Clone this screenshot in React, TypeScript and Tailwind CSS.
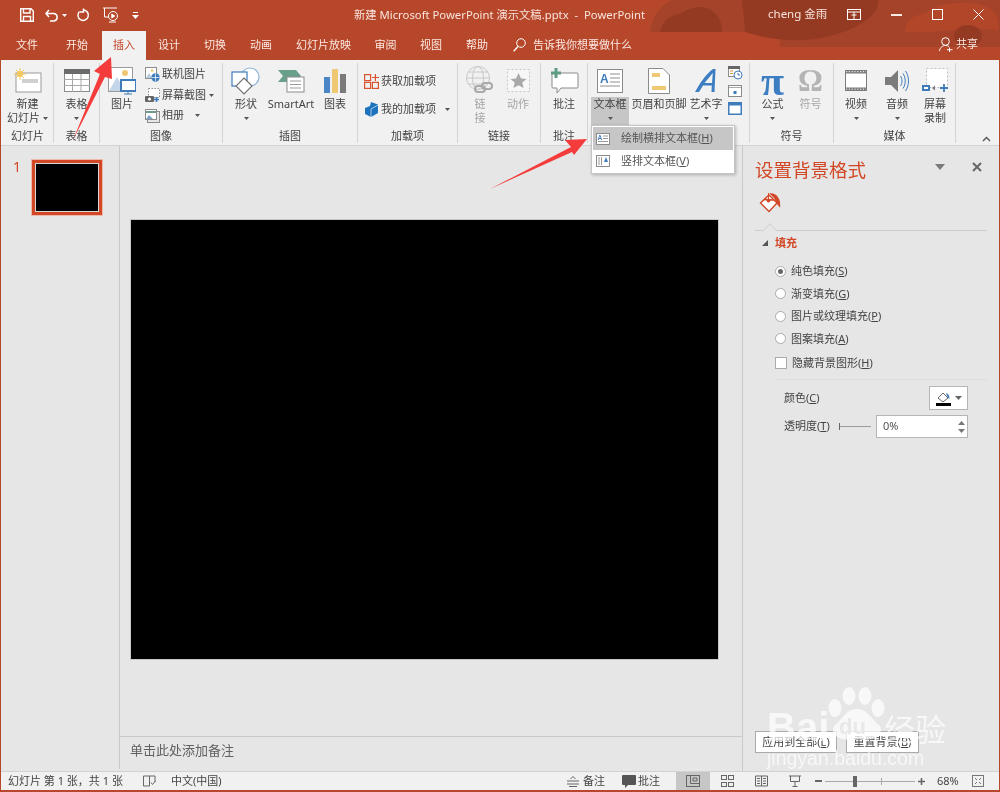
import React from "react";

const FONT = "[font-family:'Noto_Sans','Noto_Sans_CJK_SC',sans-serif]";

const Caret = ({ className = "", color = "#555", w = 5, h = 3 }: { className?: string; color?: string; w?: number; h?: number }) => (
  <svg width={w} height={h} viewBox="0 0 7 4" preserveAspectRatio="none" className={className}><path d="M0 0H7L3.5 4Z" fill={color} /></svg>
);

function Large({ w, icon, lines, caret, disabled, active }: { w: number; icon: React.ReactNode; lines: string[]; caret?: "below" | "inline"; disabled?: boolean; active?: boolean }) {
  return (
    <div className="flex flex-col items-center shrink-0" style={{ width: w }}>
      <div className="h-[33px] flex items-center justify-center">{icon}</div>
      <div className={`flex flex-col items-center leading-[14px] ${active ? "bg-[#c6c6c6] w-[38px] h-[29px]" : ""} ${disabled ? "text-[#a6a6a6]" : "text-[#444]"}`}>
        {lines.map((l, i) => (
          <div key={i} className="whitespace-nowrap flex items-center gap-[3px] h-[14px]">
            {l}
            {caret === "inline" && i === lines.length - 1 && <Caret />}
          </div>
        ))}
        {caret === "below" && <div className="h-[14px] flex items-center"><Caret /></div>}
      </div>
    </div>
  );
}

function Group({ w, label, children }: { w: number; label: string; children: React.ReactNode }) {
  return (
    <div className="flex flex-col border-r border-[#d4d4d4] shrink-0" style={{ width: w }}>
      <div className="flex-1 pt-[1px] flex min-h-0">{children}</div>
      <div className="h-[17px] leading-[19px] text-center text-[#444]">{label}</div>
    </div>
  );
}

function Small({ icon, text, caret, caretGap = 3 }: { icon: React.ReactNode; text: string; caret?: boolean; caretGap?: number }) {
  return (
    <div className="flex items-center h-[21px] text-[#444] whitespace-nowrap">
      <div className="w-[16px] flex justify-center mr-[2px]">{icon}</div>
      <span>{text}</span>
      {caret && <span className="flex shrink-0" style={{ marginLeft: caretGap }}><Caret /></span>}
    </div>
  );
}

const U = ({ t, k }: { t: string; k: string }) => (
  <span>{t}(<span className="underline">{k}</span>)</span>
);

function Radio({ checked, text, k }: { checked?: boolean; text: string; k: string }) {
  return (
    <div className="h-[22.5px] flex items-center pl-[20px]">
      <div className="w-[11px] h-[11px] rounded-full border border-[#ababab] bg-white flex items-center justify-center mr-[5px]">
        {checked && <div className="w-[5px] h-[5px] rounded-full bg-[#666]" />}
      </div>
      <U t={text} k={k} />
    </div>
  );
}

const Tab = ({ w, t, active }: { w: number; t: string; active?: boolean }) => (
  <div
    style={{ width: w }}
    className={`text-center shrink-0 leading-[28px] h-[29px] ${active ? "bg-[#f1f1f1] text-[#c4472b]" : "text-[#fbe9e3]"}`}
  >
    {t}
  </div>
);

const IcNewSlide = () => (
  <svg width="28" height="26" viewBox="0 0 28 26">
    <rect x="2" y="5" width="25" height="19" fill="#fff" stroke="#9a9a9a" />
    <rect x="8" y="11" width="16" height="4" fill="#d0d0d0" />
    <circle cx="6" cy="6" r="3" fill="#f2c75c" />
    <path d="M6 0V12M0 6H12M2 2L10 10M10 2L2 10" stroke="#f2c75c" strokeWidth="1" />
  </svg>
);
const IcTable = () => (
  <svg width="26" height="23" viewBox="0 0 26 23">
    <rect x="0.5" y="0.5" width="25" height="22" fill="#fff" stroke="#8b8b8b" />
    <rect x="0" y="0" width="26" height="5" fill="#6b6b6b" />
    <path d="M0 10.5H26M0 16.5H26M8.5 5V23M17 5V23" stroke="#a8a8a8" />
  </svg>
);
const IcPicture = () => (
  <svg width="28" height="28" viewBox="0 0 28 28">
    <rect x="0.5" y="0.5" width="24" height="24" fill="#fff" stroke="#9a9a9a" />
    <path d="M1 24L9 10L17 24Z" fill="#c3d5e8" />
    <circle cx="17" cy="6" r="3" fill="#f0c674" />
    <rect x="13" y="13" width="15" height="11" fill="#fff" stroke="#3f7cbc" strokeWidth="2" />
    <path d="M20 24V27M16 27H24" stroke="#3f7cbc" />
  </svg>
);
const IcOnline = () => (
  <svg width="15" height="15" viewBox="0 0 15 15">
    <rect x="0.5" y="0.5" width="11" height="11" fill="#fff" stroke="#8c8c8c" />
    <path d="M1 11L4 6L7 11Z" fill="#b7cde3" />
    <circle cx="7" cy="3.5" r="1.3" fill="#f0c674" />
    <circle cx="10.5" cy="10.5" r="4.2" fill="#3f7cbc" />
    <path d="M6.5 10.5H14.5M10.5 6.5V14.5" stroke="#fff" strokeWidth=".7" />
  </svg>
);
const IcShot = () => (
  <svg width="15" height="15" viewBox="0 0 15 15">
    <rect x="3.5" y="0.5" width="11" height="9" fill="#fff" stroke="#8c8c8c" strokeDasharray="1.5 1.5" />
    <rect x="0" y="8" width="9" height="6" rx="1" fill="#666" />
    <circle cx="4.5" cy="11" r="1.6" fill="#fff" />
    <path d="M11.5 9V14M9 11.5H14" stroke="#3f7cbc" strokeWidth="1.6" />
  </svg>
);
const IcAlbum = () => (
  <svg width="15" height="14" viewBox="0 0 15 14">
    <rect x="2.5" y="2.5" width="12" height="11" fill="#e6e6e6" stroke="#8c8c8c" />
    <rect x="0.5" y="0.5" width="11" height="10" fill="#fff" stroke="#8c8c8c" />
    <path d="M1 3H11" stroke="#6f9a86" strokeWidth="2" />
    <path d="M1 10L4 6L8 10Z" fill="#7aa2c9" />
  </svg>
);
const IcShapes = () => (
  <svg width="30" height="28" viewBox="0 0 30 28">
    <circle cx="19" cy="10" r="9" fill="#fff" stroke="#8db2d9" strokeWidth="1.2" />
    <rect x="1" y="5" width="15" height="14" fill="#fff" stroke="#3f7cbc" strokeWidth="1.2" />
    <path d="M13 11L21 19L13 27L5 19Z" fill="#fff" stroke="#6e6e6e" strokeWidth="1.1" />
  </svg>
);
const IcSmartArt = () => (
  <svg width="28" height="24" viewBox="0 0 28 24">
    <path d="M1 1H19L24 7L19 13H1L6 7Z" fill="#6aa08a" />
    <rect x="10" y="8" width="17" height="15" fill="#fff" stroke="#8b8b8b" />
    <path d="M13 12H24M13 15.5H24M13 19H24" stroke="#9a9a9a" />
  </svg>
);
const IcChart = () => (
  <svg width="22" height="25" viewBox="0 0 22 25">
    <rect x="0" y="9" width="6" height="16" fill="#4a86c5" />
    <rect x="8" y="1" width="6" height="24" fill="#efc873" />
    <rect x="16" y="6" width="6" height="19" fill="#7a7a7a" />
  </svg>
);
const IcGetAdd = () => (
  <svg width="15" height="15" viewBox="0 0 15 15" fill="none" stroke="#d9532f" strokeWidth="1.2">
    <rect x="0.6" y="0.6" width="6" height="6" />
    <rect x="0.6" y="8.4" width="6" height="6" />
    <rect x="8.4" y="8.4" width="6" height="6" />
    <path d="M11.4 0V7M8 3.5H15" />
  </svg>
);
const IcMyAdd = () => (
  <svg width="15" height="15" viewBox="0 0 15 15">
    <path d="M7 0L14 2.5V11L7 15L1 12V6L6 4Z" fill="#1e73be" />
    <path d="M7 7L14 3M7 7V15" stroke="#fff" strokeWidth=".6" />
  </svg>
);
const IcLink = () => (
  <svg width="30" height="30" viewBox="0 0 30 30" fill="none">
    <circle cx="13" cy="12" r="11.5" stroke="#c8c8c8" />
    <ellipse cx="13" cy="12" rx="5.5" ry="11.5" stroke="#c8c8c8" />
    <path d="M1.5 12H24.5M3 6H23M3 18H23" stroke="#c8c8c8" />
    <rect x="10" y="20" width="10" height="6" rx="3" stroke="#a9a9a9" strokeWidth="2" />
    <rect x="17" y="17" width="10" height="6" rx="3" stroke="#a9a9a9" strokeWidth="2" />
  </svg>
);
const IcAction = () => (
  <svg width="25" height="25" viewBox="0 0 25 25">
    <rect x="1.5" y="1.5" width="22" height="22" fill="#f7f7f7" stroke="#c4c4c4" strokeDasharray="2 2" />
    <path d="M12.5 5L15 10.5L20.5 11L16.3 14.6L17.6 20L12.5 17.2L7.4 20L8.7 14.6L4.5 11L10 10.5Z" fill="#a9a9a9" />
  </svg>
);
const IcComment = () => (
  <svg width="29" height="26" viewBox="0 0 29 26">
    <path d="M3 5H27A1 1 0 0 1 28 6V19A1 1 0 0 1 27 20H11L7 25V20H3A1 1 0 0 1 2 19V6A1 1 0 0 1 3 5Z" fill="#fff" stroke="#8b8b8b" />
    <path d="M6 0V10M1 5H11" stroke="#5f9c84" strokeWidth="3" />
  </svg>
);
const IcTextBox = () => (
  <svg width="26" height="24" viewBox="0 0 26 24">
    <rect x="0.5" y="0.5" width="25" height="23" fill="#fff" stroke="#8b8b8b" />
    <text x="3" y="14" fontSize="12" fontWeight="700" fill="#3f7cbc" fontFamily="Liberation Sans">A</text>
    <path d="M13 5H23M13 9H23M13 13H23M3 17H23" stroke="#8f8f8f" />
  </svg>
);
const IcHeader = () => (
  <svg width="22" height="26" viewBox="0 0 22 26">
    <path d="M.5.5H15L21.5 7V25.5H.5Z" fill="#fff" stroke="#8b8b8b" />
    <rect x="4" y="5" width="8" height="4" fill="#efc873" />
    <rect x="4" y="18" width="14" height="4" fill="#efc873" />
  </svg>
);
const IcWordArt = () => (
  <svg width="24" height="24" viewBox="0 0 24 24">
    <path d="M1 23C6 14 12 5 19 0H21.5L20.5 23H17.5L17.8 16.5H9L5 23ZM10.5 14H18L18.8 4Z" fill="#3d7ec2" />
  </svg>
);
const IcDate = () => (
  <svg width="15" height="15" viewBox="0 0 15 15">
    <rect x=".5" y="1.5" width="11" height="10" fill="#fff" stroke="#8b8b8b" />
    <rect x="0" y="1" width="12" height="3" fill="#666" />
    <path d="M2 6H5M2 8.5H5" stroke="#d9932f" />
    <circle cx="10" cy="10" r="4" fill="#fff" stroke="#3f7cbc" />
    <path d="M10 8V10H12" stroke="#3f7cbc" fill="none" />
  </svg>
);
const IcNum = () => (
  <svg width="14" height="12" viewBox="0 0 14 12">
    <rect x=".5" y=".5" width="13" height="11" fill="#fff" stroke="#8b8b8b" />
    <path d="M1 2.5H13" stroke="#aaa" />
    <rect x="5.5" y="6" width="3" height="3" fill="#3f7cbc" />
  </svg>
);
const IcObj = () => (
  <svg width="14" height="13" viewBox="0 0 14 13">
    <rect x=".75" y=".75" width="12.5" height="11.5" fill="#fff" stroke="#3f7cbc" strokeWidth="1.5" />
    <rect x="0" y="0" width="14" height="3.5" fill="#3f7cbc" />
  </svg>
);
const IcFilm = () => (
  <svg width="22" height="21" viewBox="0 0 22 21">
    <rect x=".5" y=".5" width="21" height="20" fill="#fff" stroke="#7b7b7b" />
    <rect x="0" y="0" width="22" height="3.5" fill="#7b7b7b" />
    <rect x="0" y="17.5" width="22" height="3.5" fill="#7b7b7b" />
    <path d="M1 1.7H21M1 19.2H21" stroke="#fff" strokeDasharray="1.2 1.6" />
  </svg>
);
const IcAudio = () => (
  <svg width="24" height="24" viewBox="0 0 24 24" fill="none">
    <path d="M0 8H6L13 1V23L6 16H0Z" fill="#7b7b7b" />
    <path d="M15.5 7C17.5 10 17.5 14 15.5 17M18 4.5C21 9 21 15 18 19.5M20.5 2C24.5 8 24.5 16 20.5 22" stroke="#3f7cbc" />
  </svg>
);
const IcRec = () => (
  <svg width="27" height="26" viewBox="0 0 27 26">
    <rect x="4.5" y=".5" width="21" height="19" fill="#fff" stroke="#bdbdbd" strokeDasharray="2 2" />
    <rect x="0" y="17" width="8" height="6" fill="#3f7cbc" />
    <rect x="2" y="19" width="4" height="2" fill="#fff" />
    <path d="M10 20L13 17.5V22.5Z" fill="#7b7b7b" />
    <path d="M22 16V24M18 20H26" stroke="#3f7cbc" strokeWidth="1.8" />
  </svg>
);

export default function App() {
  return (
    <div className={`relative w-[1000px] h-[792px] overflow-hidden bg-[#b7472a] flex flex-col text-[11px] blur-[0.3px] ${FONT}`}>
      {/* Header */}
      <div className="relative h-[60px] shrink-0">
        <svg className="absolute left-0 top-0" width="1000" height="60" viewBox="0 0 1000 60">
          <path d="M650 32C652 16 660 6 672 0H1000V47H780V32Z" fill="#a5432a" />
          <path d="M678 32A24 24 0 0 1 722 32Z" fill="#953a22" />
          <path d="M660 32A22 22 0 0 1 680 14C700 0 722 8 722 32Z" fill="#953a22" />
          <path d="M742 0H878C880 14 860 28 830 36C800 44 770 40 745 32Z" fill="#953a22" />
          <path d="M905 32C905 18 918 14 925 14C935 2 970 0 985 6C998 12 1000 22 998 30C970 26 940 34 905 32Z" fill="#b7472a" opacity=".75" />
          <ellipse cx="968" cy="36" rx="14" ry="11" fill="#953a22" />
        </svg>
        <div className="relative h-[30px] flex items-center text-[#f8e4dd]">
          <div className="flex items-center w-[150px] pl-[20px] text-white">
            <svg width="14" height="14" viewBox="0 0 14 14" className="mr-[11px]" fill="none" stroke="#fff" strokeWidth="1.4">
              <path d="M.7.7H11L13.3 3V13.3H.7Z" />
              <path d="M3.5 1V5H10V1M3.5 13V8.5H10.5V13" />
            </svg>
            <svg width="14" height="13" viewBox="0 0 14 13" className="mr-[3px]" fill="none" stroke="#fff" strokeWidth="1.5">
              <path d="M1 4.5H9A3.8 3.8 0 0 1 9 12H5M4 1L1 4.5L4 8" />
            </svg>
            <Caret color="#fff" className="mr-[9px]" />
            <svg width="14" height="14" viewBox="0 0 14 14" className="mr-[12px]" fill="none" stroke="#fff" strokeWidth="1.5">
              <path d="M7.5 2A5.2 5.2 0 1 1 3.5 3.5M7.5 .5V4H4" />
            </svg>
            <svg width="18" height="16" viewBox="0 0 18 16" className="mr-[12px]" fill="none" stroke="#fff">
              <path d="M1 1H15M2.5 1V10H7" />
              <circle cx="11" cy="9" r="4.5" />
              <path d="M9.8 7V11L12.8 9Z" fill="#fff" />
              <path d="M7 15H14" />
            </svg>
            <svg width="7" height="7" viewBox="0 0 7 7"><path d="M1 0H6V1H1ZM0 3H7L3.5 7Z" fill="#fff" /></svg>
          </div>
          <div className="ml-[204px] text-[11.3px] whitespace-nowrap">新建 Microsoft PowerPoint 演示文稿.pptx&nbsp; -&nbsp; PowerPoint</div>
          <div className="absolute left-[768px] top-0 h-[30px] leading-[28px] whitespace-nowrap text-[11.5px]">cheng 金雨</div>
          <svg className="absolute left-[847px] top-[9px]" width="14" height="11" viewBox="0 0 14 11" fill="none" stroke="#fff"><rect x=".5" y=".5" width="13" height="10" /><path d="M.5 3H13.5M7 3V10.5M4.5 6H9.5" /></svg>
          <div className="absolute left-[891px] top-[14px] w-[11px] h-[1.5px] bg-[#fbe9e3]" />
          <div className="absolute left-[932px] top-[9px] w-[11px] h-[11px] border border-white" />
          <svg className="absolute left-[973px] top-[9px]" width="11" height="11" viewBox="0 0 11 11" stroke="#fff"><path d="M.5.5L10.5 10.5M10.5.5L.5 10.5" /></svg>
        </div>
        <div className="relative h-[30px] flex items-start pt-[1px] pl-[2px]">
          <Tab w={50} t="文件" />
          <Tab w={50} t="开始" />
          <Tab w={44} t="插入" active />
          <Tab w={46} t="设计" />
          <Tab w={46} t="切换" />
          <Tab w={46} t="动画" />
          <Tab w={79} t="幻灯片放映" />
          <Tab w={45} t="审阅" />
          <Tab w={46} t="视图" />
          <Tab w={46} t="帮助" />
          <div className="flex items-center h-[28px] ml-[13px] text-[#fbe9e3] whitespace-nowrap">
            <svg width="13" height="14" viewBox="0 0 13 14" fill="none" stroke="#fff" className="mr-[7px]"><circle cx="8" cy="5" r="4.3" /><path d="M5 8.5L.7 13.3" strokeWidth="1.3" /></svg>
            告诉我你想要做什么
          </div>
          <div className="absolute left-[939px] top-[6px] flex items-center text-[#fbe9e3] whitespace-nowrap">
            <svg width="14" height="15" viewBox="0 0 14 15" fill="none" stroke="#fff" className="mr-[3px]"><circle cx="6.5" cy="4.5" r="3.8" /><path d="M.5 14C1 10 4 8.5 6.5 8.5C8 8.5 9 9 10 9.5M10.5 10.5V15M8 12.7H13.5" /></svg>
            共享
          </div>
        </div>
      </div>

      {/* Ribbon */}
      <div className="h-[85px] shrink-0 mx-[1px] bg-[#f1f1f1] flex pt-[3px] pb-[2px] pl-[1px] relative text-[11px]">
        <Group w={52} label="幻灯片">
          <Large w={51} icon={<IcNewSlide />} lines={["新建", "幻灯片"]} caret="inline" />
        </Group>
        <Group w={46} label="表格">
          <Large w={45} icon={<IcTable />} lines={["表格"]} caret="below" />
        </Group>
        <Group w={123} label="图像">
          <Large w={44} icon={<IcPicture />} lines={["图片"]} />
          <div className="flex flex-col">
            <Small icon={<IcOnline />} text="联机图片" />
            <Small icon={<IcShot />} text="屏幕截图" caret />
            <Small icon={<IcAlbum />} text="相册" caret caretGap={11} />
          </div>
        </Group>
        <Group w={135} label="插图">
          <Large w={46} icon={<IcShapes />} lines={["形状"]} caret="below" />
          <Large w={44} icon={<IcSmartArt />} lines={["SmartArt"]} />
          <Large w={44} icon={<IcChart />} lines={["图表"]} />
        </Group>
        <Group w={100} label="加载项">
          <div className="flex flex-col pl-[5px] pt-[7px] gap-[7px]">
            <Small icon={<IcGetAdd />} text="获取加载项" />
            <Small icon={<IcMyAdd />} text="我的加载项" caret caretGap={9} />
          </div>
        </Group>
        <Group w={83} label="链接">
          <Large w={44} icon={<IcLink />} lines={["链", "接"]} disabled />
          <Large w={32} icon={<IcAction />} lines={["动作"]} disabled />
        </Group>
        <Group w={47} label="批注">
          <Large w={46} icon={<IcComment />} lines={["批注"]} />
        </Group>
        <Group w={162} label="">
          <Large w={44} icon={<IcTextBox />} lines={["文本框"]} caret="below" active />
          <Large w={54} icon={<IcHeader />} lines={["页眉和页脚"]} />
          <Large w={40} icon={<IcWordArt />} lines={["艺术字"]} caret="below" />
          <div className="flex flex-col items-center w-[18px] pt-[1px] gap-[5px]">
            <IcDate />
            <IcNum />
            <IcObj />
          </div>
        </Group>
        <Group w={84} label="符号">
          <Large w={45} icon={<span className="text-[#3d7ec2] text-[42px] leading-[32px] [font-family:'Liberation_Serif',serif] font-bold">π</span>} lines={["公式"]} caret="below" />
          <Large w={31} icon={<span className="text-[#b4b4b4] text-[31px] leading-[32px] [font-family:'Liberation_Serif',serif] font-bold">Ω</span>} lines={["符号"]} disabled />
        </Group>
        <Group w={122} label="媒体">
          <Large w={44} icon={<IcFilm />} lines={["视频"]} caret="below" />
          <Large w={38} icon={<IcAudio />} lines={["音频"]} caret="below" />
          <Large w={38} icon={<IcRec />} lines={["屏幕", "录制"]} />
        </Group>
        <svg className="absolute left-[981px] top-[76px]" width="9" height="6" viewBox="0 0 9 6" fill="none" stroke="#555" strokeWidth="1.4"><path d="M1 5L4.5 1.5L8 5" /></svg>
      </div>
      <div className="h-[1px] mx-[1px] shrink-0 bg-[#d2d2d2]" />

      {/* Main */}
      <div className="h-[625px] shrink-0 mx-[1px] flex bg-[#e6e6e6]">
        <div className="w-[119px] shrink-0 border-r border-[#c9c9c9] flex items-start pt-[14px] pl-[12px] mb-[2px]">
          <span className="text-[#d24726] text-[14px] leading-[14px] w-[19px]">1</span>
          <div className="w-[70px] h-[55px] border-[3px] border-[#d24726] bg-black outline outline-[1px] outline-[#eeb9aa] shadow-[inset_0_0_0_1px_#d8d8d8]" />
        </div>
        <div className="w-[623px] shrink-0 border-r border-[#c9c9c9] flex flex-col">
          <div className="flex-1 pl-[11px] pt-[74px]">
            <div className="w-[587px] h-[439px] bg-black outline outline-[1px] outline-[#c8c8c8]" />
          </div>
          <div className="h-[35px] border-t border-[#c9c9c9] pl-[10px] leading-[26px] text-[13px] text-[#616161]">单击此处添加备注</div>
        </div>
        <div className="flex-1 flex flex-col pl-[12px] text-[#444] relative">
          <div className="mt-[12px] h-[24px] flex items-center text-[#d24726] text-[18.5px] whitespace-nowrap">设置背景格式</div>
          <svg className="absolute left-[192px] top-[18px]" width="10" height="6" viewBox="0 0 10 6"><path d="M0 0H10L5 6Z" fill="#7a7a7a" /></svg>
          <svg className="absolute left-[229px] top-[16px]" width="10" height="10" viewBox="0 0 10 10" stroke="#666" strokeWidth="2"><path d="M1 1L9 9M9 1L1 9" /></svg>
          <div className="mt-[10px] h-[22px] pl-[4px]">
            <svg width="23" height="22" viewBox="0 0 23 22" fill="none" stroke="#d24726" strokeWidth="1.4">
              <path d="M1.5 11L10 3L18 11L10 19.5Z" fill="#fff" />
              <path d="M5 7.5C10 8 14 8 15 8" />
              <path d="M9.5 1V8" strokeWidth="1" />
              <circle cx="9.5" cy="8.5" r="1.2" fill="#d24726" />
              <path d="M12 2C17 2 21 7 20.5 14L18 11L16 6Z" fill="#d24726" />
            </svg>
          </div>
          <svg className="mt-[8px]" width="232" height="9" viewBox="0 0 232 9" fill="none" stroke="#cfcfcf"><path d="M0 8.5H9L15 1.5L21 8.5H232" /></svg>
          <div className="mt-[4px] h-[16px] flex items-center pl-[7px]">
            <svg width="6" height="6" viewBox="0 0 6 6" className="mr-[7px]"><path d="M0 6H6V0Z" fill="#555" /></svg>
            <span className="text-[#d24726] font-bold">填充</span>
          </div>
          <div className="mt-[9px]">
            <Radio checked text="纯色填充" k="S" />
            <Radio text="渐变填充" k="G" />
            <Radio text="图片或纹理填充" k="P" />
            <Radio text="图案填充" k="A" />
          </div>
          <div className="mt-[2px] h-[22px] flex items-center pl-[20px]">
            <div className="w-[12px] h-[12px] border border-[#ababab] bg-white mr-[5px]" />
            <U t="隐藏背景图形" k="H" />
          </div>
          <div className="mt-[5px] h-[1px] ml-[20px] w-[212px] bg-[#dcdcdc]" />
          <div className="mt-[6px] h-[24px] flex items-center pl-[29px]">
            <div className="w-[145px]"><U t="颜色" k="C" /></div>
            <div className="w-[39px] h-[24px] border border-[#b5b5b5] bg-white flex items-center justify-center gap-[3px]">
              <svg width="16" height="16" viewBox="0 0 16 16">
                <path d="M2 8L7 3L12 8L7 12Z" fill="#fff" stroke="#666" />
                <path d="M10 3C13 4 14 7 13 9L11 6Z" fill="#3f7cbc" />
                <rect x="0" y="13" width="15" height="3" fill="#000" />
              </svg>
              <Caret color="#666" w={7} h={4} />
            </div>
          </div>
          <div className="mt-[5px] h-[23px] flex items-center pl-[29px]">
            <div className="w-[55px]"><U t="透明度" k="T" /></div>
            <div className="w-[32px] h-[1px] bg-[#9a9a9a] relative mr-[5px]"><div className="absolute left-0 top-[-3px] w-[1px] h-[7px] bg-[#666]" /></div>
            <div className="w-[92px] h-[23px] border border-[#b5b5b5] bg-white flex items-center justify-between pl-[6px] pr-[2px]">
              <span className="text-[#555]">0%</span>
              <div className="flex flex-col gap-[4px]">
                <svg width="7" height="4" viewBox="0 0 7 4"><path d="M0 4H7L3.5 0Z" fill="#777" /></svg>
                <Caret color="#777" w={7} h={4} />
              </div>
            </div>
          </div>
          <div className="mt-auto mb-[18px] flex gap-[9px]">
            <div className="w-[82px] h-[22px] border border-[#ababab] bg-white flex items-center justify-center"><U t="应用到全部" k="L" /></div>
            <div className="w-[73px] h-[22px] border border-[#ababab] bg-white flex items-center justify-center"><U t="重置背景" k="B" /></div>
          </div>
        </div>
      </div>

      {/* Status bar */}
      <div className="h-[19px] shrink-0 mx-[1px] mb-[2px] bg-[#f1f1f1] border-t border-[#d2d2d2] flex items-center text-[#444] text-[11px] whitespace-nowrap">
        <span className="ml-[7px] w-[134px]">幻灯片 第 1 张，共 1 张</span>
        <svg width="13" height="12" viewBox="0 0 13 12" fill="none" stroke="#666" className="mr-[15px] ml-[1px]"><path d="M.5 1H6.5V11H.5ZM6.5 1H12V7M8 7.5L9.5 9.5L12.5 6" /></svg>
        <span>中文(中国)</span>
        <div className="flex-1" />
        <svg width="12" height="11" viewBox="0 0 12 11" fill="none" stroke="#666" className="mr-[4px]"><path d="M0 5H12M0 8H12M2 10.5H10M3.5 3L6 .5L8.5 3" /></svg>
        <span className="mr-[17px]">备注</span>
        <svg width="14" height="13" viewBox="0 0 14 13" className="mr-[2px]"><path d="M1 0H13A1 1 0 0 1 14 1V9A1 1 0 0 1 13 10H6L3 13V10H1A1 1 0 0 1 0 9V1A1 1 0 0 1 1 0Z" fill="#555" /></svg>
        <span className="mr-[16px]">批注</span>
        <div className="w-[34px] h-[18px] bg-[#c6c6c6] flex items-center justify-center">
          <svg width="14" height="12" viewBox="0 0 14 12" fill="none" stroke="#666"><rect x=".5" y=".5" width="13" height="11" /><path d="M4.5 .5V8.5H13.5M7 3H11V6H7Z" /></svg>
        </div>
        <div className="w-[34px] flex justify-center">
          <svg width="13" height="12" viewBox="0 0 13 12" fill="none" stroke="#666"><rect x=".5" y=".5" width="5" height="4" /><rect x="7.5" y=".5" width="5" height="4" /><rect x=".5" y="7.5" width="5" height="4" /><rect x="7.5" y="7.5" width="5" height="4" /></svg>
        </div>
        <div className="w-[34px] flex justify-center">
          <svg width="13" height="12" viewBox="0 0 13 12" fill="none" stroke="#666"><path d="M.5 1H6.5V11H.5ZM6.5 1H12.5V11H6.5ZM2 3.5H5M2 6H5M2 8.5H5M8 3.5H11M8 6H11M8 8.5H11" /></svg>
        </div>
        <div className="w-[34px] flex justify-center">
          <svg width="12" height="12" viewBox="0 0 12 12" fill="none" stroke="#666"><path d="M0 1H12M1.5 1V6.5H10.5V1M6 6.5V11.5M3.5 11.5H8.5" /></svg>
        </div>
        <div className="w-[7px] h-[2px] bg-[#666] ml-[3px] mr-[3px]" />
        <div className="relative w-[90px] h-[1px] bg-[#a8a8a8]">
          <div className="absolute left-[56px] top-[-3px] w-[1px] h-[7px] bg-[#a8a8a8]" />
          <div className="absolute left-[28px] top-[-5px] w-[4px] h-[11px] bg-[#666]" />
        </div>
        <svg width="7" height="7" viewBox="0 0 7 7" className="ml-[3px]" stroke="#666" strokeWidth="1.6"><path d="M3.5 0V7M0 3.5H7" /></svg>
        <span className="ml-[12px] w-[35px]">68%</span>
        <svg width="12" height="12" viewBox="0 0 12 12" fill="none" stroke="#777" className="mr-[15px]"><rect x=".5" y=".5" width="11" height="11" /><path d="M3 3L5 5M9 3L7 5M3 9L5 7M9 9L7 7" /></svg>
      </div>

      {/* Dropdown menu */}
      <div className="absolute left-[591px] top-[125px] w-[144px] h-[49px] bg-white border border-[#c6c6c6] shadow-[1px_1px_3px_rgba(0,0,0,0.25)] pt-[1px] text-[#555]">
        <div className="h-[23px] mx-[1px] bg-[#c6c6c6] flex items-center pl-[3px]">
          <svg width="14" height="12" viewBox="0 0 14 12" className="mr-[11px]"><rect x=".5" y=".5" width="13" height="11" fill="#fff" stroke="#8b8b8b" /><text x="1.5" y="7" fontSize="6.5" fontWeight="700" fill="#3f7cbc" fontFamily="Liberation Sans">A</text><path d="M7 3H12M7 5.5H12M2 8.5H12" stroke="#999" /></svg>
          <U t="绘制横排文本框" k="H" />
        </div>
        <div className="h-[22px] mx-[1px] flex items-center pl-[3px]">
          <svg width="14" height="12" viewBox="0 0 14 12" className="mr-[11px]"><rect x=".5" y=".5" width="13" height="11" fill="#fff" stroke="#8b8b8b" /><path d="M3 2V10M5.5 2V10" stroke="#999" /><path d="M8 7L10 2L12 7Z" fill="#3f7cbc" /></svg>
          <U t="竖排文本框" k="V" />
        </div>
      </div>

      {/* Baidu watermark */}
      <div className="absolute left-[766px] top-[684px] w-[184px] h-[90px] pointer-events-none text-white/70 [font-family:'Liberation_Sans',sans-serif]">
        <svg className="absolute left-[56px] top-[0px]" width="70" height="62" viewBox="0 0 70 62" fill="rgba(255,255,255,0.72)">
          <ellipse cx="27" cy="12" rx="6.5" ry="9" />
          <ellipse cx="43" cy="12" rx="6.5" ry="9" />
          <ellipse cx="13" cy="24" rx="6.5" ry="9" />
          <ellipse cx="56" cy="24" rx="6.5" ry="9" />
          <path d="M35 25C46 25 50 36 58 42C62 52 52 58 35 55C18 58 8 52 12 42C20 36 24 25 35 25Z" />
        </svg>
        <span className="absolute left-[1px] top-[18px] text-[40px] leading-[50px] font-bold whitespace-nowrap">Bai</span>
        <span className="absolute left-[73px] top-[30px] text-[22px] leading-[26px] font-bold text-[#e6e6e6]/90">du</span>
        <span className="absolute left-[118px] top-[26px] text-[31px] leading-[36px] whitespace-nowrap [font-family:'Noto_Sans_CJK_SC',sans-serif]">经验</span>
        <span className="absolute left-[1px] top-[63px] text-[19.5px] leading-[22px] whitespace-nowrap">jingyan.baidu.com</span>
      </div>

      {/* Red arrows */}
      <svg className="absolute left-0 top-0 pointer-events-none" width="1000" height="792" viewBox="0 0 1000 792">
        <polygon points="111,57 94,71 100,74 73,140 105,77 112,79" fill="#f53c3c" />
        <polygon points="587,139 565,140 571,147 490,189 572,152 574,155" fill="#f53c3c" />
      </svg>
    </div>
  );
}
